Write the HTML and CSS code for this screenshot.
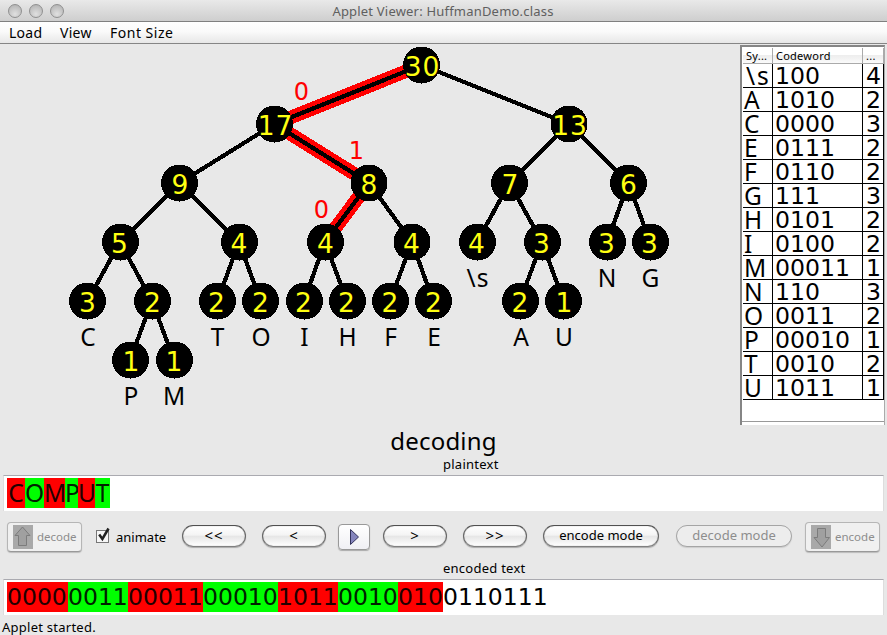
FILE: index.html
```
<!DOCTYPE html>
<html lang="en">
<head>
<meta charset="utf-8">
<title>Applet Viewer: HuffmanDemo.class</title>
<link rel="stylesheet" href="styles.css">
</head>
<body>
<div class="window">
  <header class="titlebar">
    <div class="lights"><i></i><i></i><i></i></div>
    <h1>Applet Viewer: HuffmanDemo.class</h1>
  </header>
  <nav class="menubar"><span class="m-load">Load</span><span class="m-view">View</span><span class="m-font">Font Size</span></nav>
  <main class="main">
    <svg class="tree" width="740" height="382" viewBox="0 44 740 382">
      <g class="hot">
        <path d="M421.5 65L274.5 124L369 183L325 242"/>
      </g>
      <g class="edges">
        <path d="M421.5 65L274.5 124M421.5 65L569 124M274.5 124L179.5 183M274.5 124L369 183M569 124L509.5 183M569 124L628.5 183M179.5 183L120 242M179.5 183L239 242M369 183L325 242M369 183L412 242M509.5 183L477 242M509.5 183L542 242M628.5 183L607 242M628.5 183L650 242M120 242L87.5 301M120 242L152 301M239 242L217.5 301M239 242L260.5 301M325 242L304 301M325 242L347 301M412 242L390 301M412 242L433 301M542 242L520 301M542 242L563.5 301M152 301L130 360M152 301L174 360"/>
      </g>
      <g class="nodes">
        <circle cx="421.5" cy="65" r="18.5"/><circle cx="274.5" cy="124" r="18.5"/><circle cx="569" cy="124" r="18.5"/>
        <circle cx="179.5" cy="183" r="18.5"/><circle cx="369" cy="183" r="18.5"/><circle cx="509.5" cy="183" r="18.5"/><circle cx="628.5" cy="183" r="18.5"/>
        <circle cx="120.5" cy="242" r="18.5"/><circle cx="239.5" cy="242" r="18.5"/><circle cx="325.5" cy="242" r="18.5"/><circle cx="412" cy="242" r="18.5"/><circle cx="477.5" cy="242" r="18.5"/><circle cx="542.5" cy="242" r="18.5"/><circle cx="607.5" cy="242" r="18.5"/><circle cx="650.5" cy="242" r="18.5"/>
        <circle cx="87.5" cy="301" r="18.5"/><circle cx="152.5" cy="301" r="18.5"/><circle cx="217.5" cy="301" r="18.5"/><circle cx="260.5" cy="301" r="18.5"/><circle cx="304.5" cy="301" r="18.5"/><circle cx="347.5" cy="301" r="18.5"/><circle cx="390.5" cy="301" r="18.5"/><circle cx="433.5" cy="301" r="18.5"/><circle cx="520.5" cy="301" r="18.5"/><circle cx="563.5" cy="301" r="18.5"/>
        <circle cx="130.5" cy="360" r="18.5"/><circle cx="174.5" cy="360" r="18.5"/>
      </g>
      <g class="counts">
        <text class="two" x="422.5" y="75.5">30</text><text class="two" x="275.5" y="134.5">17</text><text class="two" x="570" y="134.5">13</text>
        <text x="180" y="193.5">9</text><text x="369" y="193.5">8</text><text x="510" y="193.5">7</text><text x="628.5" y="193.5">6</text>
        <text x="119.5" y="252.5">5</text><text x="239" y="252.5">4</text><text x="325.5" y="252.5">4</text><text x="411.5" y="252.5">4</text><text x="476.5" y="252.5">4</text><text x="541.5" y="252.5">3</text><text x="606.5" y="252.5">3</text><text x="649.5" y="252.5">3</text>
        <text x="87.5" y="311.5">3</text><text x="152.5" y="311.5">2</text><text x="216.5" y="311.5">2</text><text x="260.5" y="311.5">2</text><text x="303.5" y="311.5">2</text><text x="346.5" y="311.5">2</text><text x="390" y="311.5">2</text><text x="433.5" y="311.5">2</text><text x="520" y="311.5">2</text><text x="564" y="311.5">1</text>
        <text x="131" y="370.5">1</text><text x="174" y="370.5">1</text>
      </g>
      <g class="bits"><text x="301.5" y="99.5">0</text><text x="356.5" y="158.5">1</text><text x="321.5" y="217.5">0</text></g>
      <g class="symbols">
        <text x="88" y="345.5">C</text><text x="217.5" y="345.5">T</text><text x="261" y="345.5">O</text><text x="304.5" y="345.5">I</text><text x="347.5" y="345.5">H</text><text x="390.5" y="345.5">F</text><text x="434" y="345.5">E</text><text x="521" y="345.5">A</text><text x="564" y="345.5">U</text>
        <text class="space" x="478" y="286.5">\s</text><text x="607" y="286.5">N</text><text x="650.5" y="286.5">G</text>
        <text x="131" y="404.5">P</text><text x="174" y="404.5">M</text>
      </g>
    </svg>
    <div class="panel">
      <table>
        <thead><tr><th class="c1">Sy...</th><th class="c2">Codeword</th><th class="c3">...</th></tr></thead>
        <tbody>
          <tr><td class="space">\s</td><td>100</td><td>4</td></tr>
          <tr><td>A</td><td>1010</td><td>2</td></tr>
          <tr><td>C</td><td>0000</td><td>3</td></tr>
          <tr><td>E</td><td>0111</td><td>2</td></tr>
          <tr><td>F</td><td>0110</td><td>2</td></tr>
          <tr><td>G</td><td>111</td><td>3</td></tr>
          <tr><td>H</td><td>0101</td><td>2</td></tr>
          <tr><td>I</td><td>0100</td><td>2</td></tr>
          <tr><td>M</td><td>00011</td><td>1</td></tr>
          <tr><td>N</td><td>110</td><td>3</td></tr>
          <tr><td>O</td><td>0011</td><td>2</td></tr>
          <tr><td>P</td><td>00010</td><td>1</td></tr>
          <tr><td>T</td><td>0010</td><td>2</td></tr>
          <tr><td>U</td><td>1011</td><td>1</td></tr>
        </tbody>
      </table>
    </div>
  </main>
  <section class="console">
    <h2>decoding</h2>
    <div class="label plain">plaintext</div>
    <div class="field letters"><b class="r c">C</b><b class="g o">O</b><b class="r m">M</b><b class="g p">P</b><b class="r u">U</b><b class="g t">T</b></div>
    <div class="controls">
      <button class="tile off decode"><svg width="20" height="24" viewBox="0 0 20 24"><rect width="20" height="24" fill="#a9a9a9"/><path d="M9.5 2L17 10.5H13.5V20.5H5.5V10.5H2Z" fill="#a0a0a0" stroke="#7c7c7c"/></svg><span>decode</span></button>
      <label class="check"><svg width="16" height="18" viewBox="0 0 16 18"><rect x="1.5" y="4.5" width="12" height="12" fill="#f7f7f7" stroke="#777"/><path d="M4.2 8.5L7.4 13L13.5 2.5" fill="none" stroke="#222" stroke-width="2.5"/></svg><span>animate</span></label>
      <button class="pill nav first">&lt;&lt;</button>
      <button class="pill nav prev">&lt;</button>
      <button class="play"><svg width="11" height="18" viewBox="0 0 11 18"><path d="M1.5 1.5L9.5 9L1.5 16.5Z" fill="#8585bd" stroke="#33335c"/></svg></button>
      <button class="pill nav next">&gt;</button>
      <button class="pill nav last">&gt;&gt;</button>
      <button class="pill mode">encode mode</button>
      <button class="pill mode dim">decode mode</button>
      <button class="tile off encode"><svg width="20" height="24" viewBox="0 0 20 24"><rect width="20" height="24" fill="#a9a9a9"/><path d="M6.5 3.5H14.5V12.5H18.5L11 22L3 12.5H6.5Z" fill="#a0a0a0" stroke="#7c7c7c"/></svg><span>encode</span></button>
    </div>
    <div class="label coded">encoded text</div>
    <div class="field digits"><b class="r d4 lead">0000</b><b class="g d4">0011</b><b class="r d5">00011</b><b class="g d5">00010</b><b class="r d4">1011</b><b class="g d4">0010</b><b class="r d3">010</b><span>0110111</span></div>
    <div class="status">Applet started.</div>
  </section>
</div>
</body>
</html>
```
FILE: styles.css
```
* { box-sizing: border-box; }
body { margin: 0; background: #e8e8e8; color: #000; font: 13px/16px "Noto Sans", "Open Sans", sans-serif; }
.window { width: 887px; height: 635px; overflow: hidden; display: flex; flex-direction: column; }
h1, h2 { margin: 0; font-weight: 400; }
button { margin: 0; padding: 0; font: inherit; color: inherit; }

.titlebar { height: 22px; flex: none; display: grid; grid-template-columns: 80px 1fr 81px; background: linear-gradient(#e9e9e9, #cecece); border-bottom: 1px solid #808080; border-top-left-radius: 2px; }
.lights { display: flex; gap: 7px; padding: 4px 0 0 8px; }
.lights i { width: 14px; height: 14px; border-radius: 50%; border: 1px solid #909090; background: radial-gradient(circle at 50% 75%, #e0e0e0, #bdbdbd 70%, #aaa); }
.titlebar h1 { text-align: center; font-size: 13px; line-height: 22px; color: #606060; letter-spacing: 0.2px; }

.menubar { height: 22px; flex: none; display: flex; padding-left: 9px; font-size: 14px; line-height: 21px; letter-spacing: 0.25px; background: linear-gradient(#fff, #fafafa 45%, #e7e7e7); border-bottom: 1px solid #858585; }
.m-load { width: 51px; }
.m-view { width: 50px; }
.m-font { letter-spacing: 0.5px; }

.main { height: 382px; flex: none; display: flex; }
.tree { flex: none; display: block; }
.tree text { font-family: "DejaVu Sans", sans-serif; text-anchor: middle; }
.edges, .nodes, .hot { shape-rendering: crispEdges; }
.edges path { stroke: #000; stroke-width: 4.2; fill: none; }
.hot path { stroke: #f00; stroke-width: 13.5; fill: none; }
.counts text { font-size: 26.5px; fill: #ff1; }
.counts .two { letter-spacing: 1px; }
.bits text { font-size: 24px; fill: #f00; }
.symbols text { font-family: "Noto Sans", sans-serif; font-size: 24.5px; }
.symbols .space { letter-spacing: 1px; }

.panel { width: 145px; height: 380px; margin-top: 1px; padding: 2px 2px 0 1px; background: #fff; border: 2px solid #858585; border-right: 1px solid #aaa; border-bottom: 0; box-shadow: inset 0 -3px #fff, inset 0 -4px #999; }
table { width: 141px; margin-top: -1px; border-collapse: separate; border-spacing: 0; table-layout: fixed; }
th { height: 16px; padding: 0 0 0 3px; text-align: left; font-size: 11px; line-height: 14px; font-weight: 400; letter-spacing: 0.25px; border-right: 1px solid #aaa; border-bottom: 1px solid #aaa; background: linear-gradient(#fff 45%, #eee 50%, #fafafa); white-space: nowrap; }
.c1 { width: 30px; }
.c2 { width: 90px; }
.c3 { width: 21px; }
td { height: 24px; padding: 1px 0 0 2px; font: 23.6px/22px "DejaVu Sans", sans-serif; border-right: 1px solid #000; border-bottom: 1px solid #000; white-space: nowrap; }
td:first-child { padding-left: 1px; font-family: "Noto Sans", sans-serif; font-size: 24.5px; }
td:last-child { padding-left: 3px; }
td.space { letter-spacing: 2px; padding-left: 3px; }

.console { flex: 1; display: flex; flex-direction: column; }
h2 { text-align: center; height: 30px; font-size: 24px; line-height: 29px; letter-spacing: 0.2px; }
.label { height: 19px; padding-left: 443px; line-height: 17px; letter-spacing: 0.25px; }
.field { height: 36px; margin: 0 3px; padding: 2px 0 0 3px; display: flex; background: #fff; border-top: 1px solid #aaaab0; border-left: 1px solid #ddd; border-right: 1px solid #ddd; font: 23.5px/31px "DejaVu Sans", sans-serif; }
.field b { font-weight: 400; height: 30px; flex: none; white-space: nowrap; }
.letters { font-family: "Noto Sans", sans-serif; font-size: 24.5px; line-height: 29px; }
.letters b { text-align: center; }
.r { background: #f00; color: #210000; }
.g { background: #0f0; color: #002100; }
.c { width: 18px; } .o { width: 19px; } .m { width: 21px; } .p { width: 13px; } .u { width: 17px; } .t { width: 15px; }
.d4 { width: 60px; } .d5 { width: 75px; } .d3 { width: 45px; } .lead { width: 61px; }

.controls { height: 48px; flex: none; display: flex; align-items: flex-start; padding-left: 7px; }
.tile { width: 75px; height: 30px; margin-top: 11px; display: flex; align-items: center; gap: 4px; padding: 0 0 1px 5px; border: 1px solid #b6b6b6; border-bottom-color: #999; border-radius: 4px; background: #f0f0f0; color: #8d8d8d; font-size: 11.5px; box-shadow: 0 1px 1px #bbb; }
.check { width: 87px; margin: 14px 0 0 13px; display: flex; gap: 5px; line-height: 24px; }
.check svg { flex: none; margin-top: 1px; }
.pill { height: 22px; margin-top: 14px; border: 1.5px solid #666; border-top-color: #505050; border-bottom-color: #808080; border-radius: 11px; background: linear-gradient(#fff, #f4f4f4 45%, #e6e6e6 52%, #fff); line-height: 17px; padding-bottom: 1px; box-shadow: 0 1px 1px #aaa, inset 0 0 1px #888; }
.nav { width: 64px; margin-right: 16px; font-size: 15px; letter-spacing: 1px; }
.play { width: 32px; height: 26px; margin: 13px 13px 0 -4px; display: flex; justify-content: center; align-items: center; border: 1px solid #999; border-radius: 4px; background: linear-gradient(#fff, #f0f0f4); box-shadow: 0 1px 1px #aaa; }
.mode { width: 116px; margin-right: 17px; }
.dim { color: #8d8d8d; border-color: #a5a5a5; background: #ededed; box-shadow: 0 1px 1px #ccc; }
.encode { margin-left: -4px; }
.coded { height: 20px; line-height: 19px; }
.status { padding-left: 2px; line-height: 25px; letter-spacing: 0.25px; }
```
